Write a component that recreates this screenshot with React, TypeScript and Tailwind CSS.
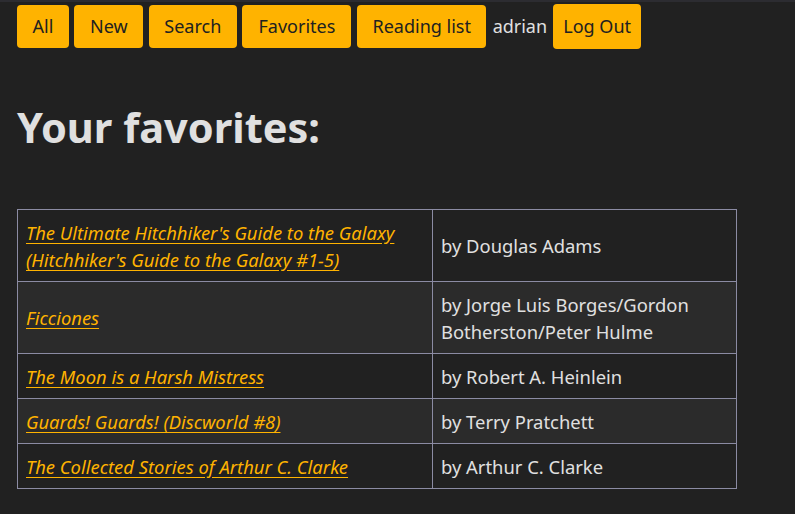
import React from "react";

const books = [
  { title: "The Ultimate Hitchhiker's Guide to the Galaxy (Hitchhiker's Guide to the Galaxy #1-5)", author: "by Douglas Adams" },
  { title: "Ficciones", author: "by Jorge Luis Borges/Gordon Botherston/Peter Hulme" },
  { title: "The Moon is a Harsh Mistress", author: "by Robert A. Heinlein" },
  { title: "Guards! Guards! (Discworld #8)", author: "by Terry Pratchett" },
  { title: "The Collected Stories of Arthur C. Clarke", author: "by Arthur C. Clarke" },
];

const btn = "bg-[#ffb300] text-[#212121] rounded-[4px] px-[15.5px] py-[9px] leading-[25px]";

export default function App() {
  return (
    <div
      className="min-h-screen bg-[#212121] text-[#e0e0e0] border-t-2 border-[#2c2c31] text-[18px]"
      style={{ fontFamily: '"Noto Sans", "Open Sans", sans-serif' }}
    >
      <nav className="flex items-center gap-[5.7px] pl-[17px] pt-[2px]">
        <button className={btn}>All</button>
        <button className={btn}>New</button>
        <button className={btn}>Search</button>
        <button className="bg-[#ffb300] text-[#212121] rounded-[4px] px-4 py-[9px] leading-[25px]">Favorites</button>
        <button className={btn}>Reading list</button>
        <span className="leading-[25px] mx-[0.5px]">adrian</span>
        <button className="bg-[#ffb300] text-[#212121] rounded-[4px] px-[10px] py-[10px] leading-[25px]">Log Out</button>
      </nav>
      <h1 className="ml-[17px] mt-[52px] text-[41.5px] leading-[52px] font-bold text-[#e0e0e0]">Your favorites:</h1>
      <table className="ml-[17px] mt-[56px] border-collapse w-[720px] text-[18.4px]">
        <tbody>
          {books.map((b, i) => (
            <tr key={i} className={i % 2 === 1 ? "bg-[#2b2b2b]" : "bg-[#212121]"}>
              <td className="border border-[#8b8ba3] px-2 py-[8.5px] leading-[27px] w-[415px] align-middle">
                <a href="#" className="italic underline text-[#ffb300] underline-offset-[3px]">{b.title}</a>
              </td>
              <td className="border border-[#8b8ba3] px-2 py-[8.5px] leading-[27px] align-middle">{b.author}</td>
            </tr>
          ))}
        </tbody>
      </table>
    </div>
  );
}
